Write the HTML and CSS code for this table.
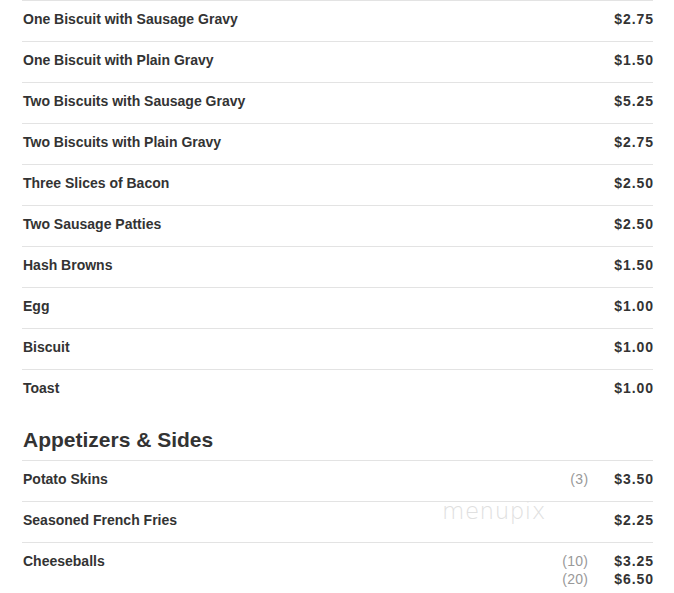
FILE: index.html
```html
<!DOCTYPE html>
<html>
<head>
<meta charset="utf-8">
<link rel="stylesheet" href="styles.css">
</head>
<body>
<div class="menu">
  <section class="section">
    <div class="item"><span class="name">One Biscuit with Sausage Gravy</span><div class="prices"><div class="pr"><span class="qty"></span><span class="price">$2.75</span></div></div></div>
    <div class="item"><span class="name">One Biscuit with Plain Gravy</span><div class="prices"><div class="pr"><span class="qty"></span><span class="price">$1.50</span></div></div></div>
    <div class="item"><span class="name">Two Biscuits with Sausage Gravy</span><div class="prices"><div class="pr"><span class="qty"></span><span class="price">$5.25</span></div></div></div>
    <div class="item"><span class="name">Two Biscuits with Plain Gravy</span><div class="prices"><div class="pr"><span class="qty"></span><span class="price">$2.75</span></div></div></div>
    <div class="item"><span class="name">Three Slices of Bacon</span><div class="prices"><div class="pr"><span class="qty"></span><span class="price">$2.50</span></div></div></div>
    <div class="item"><span class="name">Two Sausage Patties</span><div class="prices"><div class="pr"><span class="qty"></span><span class="price">$2.50</span></div></div></div>
    <div class="item"><span class="name">Hash Browns</span><div class="prices"><div class="pr"><span class="qty"></span><span class="price">$1.50</span></div></div></div>
    <div class="item"><span class="name">Egg</span><div class="prices"><div class="pr"><span class="qty"></span><span class="price">$1.00</span></div></div></div>
    <div class="item"><span class="name">Biscuit</span><div class="prices"><div class="pr"><span class="qty"></span><span class="price">$1.00</span></div></div></div>
    <div class="item"><span class="name">Toast</span><div class="prices"><div class="pr"><span class="qty"></span><span class="price">$1.00</span></div></div></div>
  </section>
  <section class="section">
    <h2 class="heading">Appetizers &amp; Sides</h2>
    <div class="item"><span class="name">Potato Skins</span><div class="prices"><div class="pr"><span class="qty">(3)</span><span class="price">$3.50</span></div></div></div>
    <div class="item"><span class="name">Seasoned French Fries</span><div class="prices"><div class="pr"><span class="qty"></span><span class="price">$2.25</span></div></div></div>
    <div class="item"><span class="name">Cheeseballs</span><div class="prices"><div class="pr"><span class="qty">(10)</span><span class="price">$3.25</span></div><div class="pr"><span class="qty">(20)</span><span class="price">$6.50</span></div></div></div>
  </section>
  <div class="watermark">menupix</div>
</div>
</body>
</html>
```
FILE: styles.css
```css
html, body {
  margin: 0;
  padding: 0;
  background: #fff;
}
body {
  font-family: "Liberation Sans", Arial, sans-serif;
  color: #333;
}
.menu {
  position: relative;
  margin: 0 21px 0 22px;
}
.section {
  display: flex;
  flex-direction: column;
}
.item {
  display: flex;
  justify-content: space-between;
  align-items: flex-start;
  border-top: 1px solid #e3e3e3;
  min-height: 41px;
  padding-top: 10px;
  box-sizing: border-box;
}
.name {
  font-size: 14px;
  font-weight: bold;
  line-height: 16px;
  padding-left: 1px;
}
.prices {
  display: flex;
  flex-direction: column;
}
.pr {
  display: flex;
  justify-content: flex-end;
  align-items: baseline;
  line-height: 18px;
  margin-top: -1px;
}
.pr + .pr {
  margin-top: 0;
}
.qty {
  color: #999;
  font-size: 14px;
  width: 42px;
  text-align: right;
  margin-right: 26px;
  letter-spacing: 0.3px;
}
.price {
  font-size: 14px;
  font-weight: bold;
  text-align: right;
  letter-spacing: 0.9px;
  margin-right: -0.9px;
}
.heading {
  margin: 0;
  font-size: 21px;
  font-weight: bold;
  line-height: 24px;
  padding: 18px 0 8px 1px;
  color: #333;
}
.watermark {
  position: absolute;
  left: 420px;
  top: 498px;
  font-size: 23px;
  font-weight: 300;
  letter-spacing: 0.5px;
  color: #e0e0e0;
  font-family: "DejaVu Sans", sans-serif;
  pointer-events: none;
}
```
